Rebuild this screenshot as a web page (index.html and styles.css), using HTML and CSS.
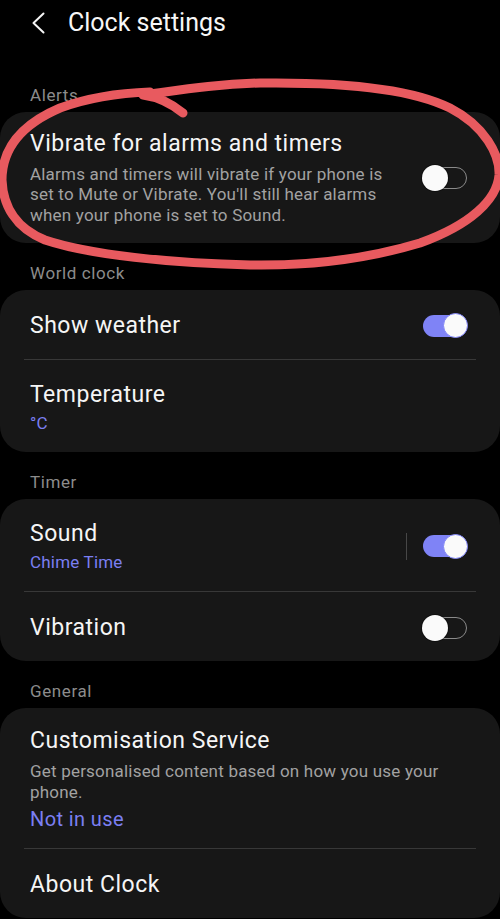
FILE: index.html
```html
<!DOCTYPE html>
<html lang="en">
<head>
<meta charset="utf-8">
<title>Clock settings</title>
<link rel="stylesheet" href="styles.css">
</head>
<body>
<div class="screen">
  <header class="topbar">
    <svg class="back" viewBox="0 0 13 22" width="13" height="22" aria-hidden="true">
      <path d="M11.5 1.5 L1.5 11 L11.5 20.5" fill="none" stroke="#f5f5f5" stroke-width="2" stroke-linecap="round" stroke-linejoin="round"/>
    </svg>
    <h1 class="title">Clock settings</h1>
  </header>

  <div class="section-label">Alerts</div>
  <section class="card">
    <div class="row row-alert">
      <div class="text">
        <div class="row-title">Vibrate for alarms and timers</div>
        <div class="row-desc">Alarms and timers will vibrate if your phone is<br>set to Mute or Vibrate. You'll still hear alarms<br>when your phone is set to Sound.</div>
      </div>
      <div class="toggle off"><span class="knob"></span></div>
    </div>
  </section>

  <div class="section-label">World clock</div>
  <section class="card">
    <div class="row row-1">
      <div class="text"><div class="row-title">Show weather</div></div>
      <div class="toggle on"><span class="knob"></span></div>
    </div>
    <div class="divider"></div>
    <div class="row row-2">
      <div class="text">
        <div class="row-title">Temperature</div>
        <div class="row-sub">°C</div>
      </div>
    </div>
  </section>

  <div class="section-label">Timer</div>
  <section class="card">
    <div class="row row-2">
      <div class="text">
        <div class="row-title">Sound</div>
        <div class="row-sub">Chime Time</div>
      </div>
      <span class="vdiv"></span>
      <div class="toggle on"><span class="knob"></span></div>
    </div>
    <div class="divider"></div>
    <div class="row row-1">
      <div class="text"><div class="row-title">Vibration</div></div>
      <div class="toggle off"><span class="knob"></span></div>
    </div>
  </section>

  <div class="section-label">General</div>
  <section class="card">
    <div class="row row-custom">
      <div class="text">
        <div class="row-title">Customisation Service</div>
        <div class="row-desc">Get personalised content based on how you use your<br>phone.</div>
        <div class="row-link">Not in use</div>
      </div>
    </div>
    <div class="divider"></div>
    <div class="row row-1">
      <div class="text"><div class="row-title">About Clock</div></div>
    </div>
  </section>

  <svg class="annotation" viewBox="0 0 500 919" width="500" height="919" aria-hidden="true">
    <path d="M183 113 C172 104 158 97 143 95 C180 90 215 84 260 83 C340 82 410 88 450 108 C485 126 500 155 499 175 C497 200 470 225 420 243 C370 258 310 266 250 265 C170 263 90 255 45 240 C15 228 3 205 2 180 C2 150 20 125 60 108 C90 97 120 93 150 92" fill="none" stroke="#e85a5f" stroke-width="9" stroke-linecap="round" stroke-linejoin="round"/>
  </svg>
</div>
</body>
</html>
```

FILE: styles.css
```css
html, body {
  margin: 0;
  padding: 0;
  background: #000;
}

body {
  font-family: Roboto, "Noto Sans", "Liberation Sans", sans-serif;
  color: #f5f5f5;
}

.screen {
  position: relative;
  width: 500px;
  height: 919px;
  overflow: hidden;
  background: #000;
}

.topbar {
  height: 65px;
  display: flex;
  align-items: flex-start;
  padding-left: 32px;
  box-sizing: border-box;
}

.back {
  margin-top: 12px;
  flex: none;
}

.title {
  margin: 8px 0 0 23px;
  font-size: 25px;
  line-height: 30px;
  font-weight: 400;
  color: #f7f7f7;
}

.section-label {
  margin: 19px 0 6px;
  padding: 0 30px;
  font-size: 17px;
  line-height: 22px;
  letter-spacing: 0.6px;
  color: #8c8c8c;
}

.card {
  background: #171717;
  border-radius: 26px;
}

.row {
  display: flex;
  align-items: center;
  padding: 0 33px 0 30px;
  box-sizing: border-box;
}

.row-alert { height: 131px; }
.row-1 { height: 69px; padding-top: 2px; }
.row-2 { height: 92px; padding-top: 2px; }
.row-custom { height: 140px; padding-top: 2px; }

.text {
  flex: 1;
  min-width: 0;
}

.row-title {
  font-size: 23px;
  line-height: 28px;
  letter-spacing: 0.5px;
  color: #f5f5f5;
}

.row-sub {
  margin-top: 3px;
  font-size: 17px;
  line-height: 22px;
  letter-spacing: 0.2px;
  color: #7b7ff2;
}

.row-desc {
  margin-top: 6px;
  font-size: 17px;
  line-height: 20.5px;
  letter-spacing: 0.2px;
  color: #a2a2a2;
  white-space: nowrap;
}

.row-link {
  margin-top: 5px;
  font-size: 20px;
  line-height: 24px;
  letter-spacing: 0.4px;
  color: #7b7ff2;
}

.divider {
  height: 1px;
  margin: 0 24px;
  background: #383838;
}

.vdiv {
  width: 1px;
  height: 27px;
  margin-right: 16px;
  background: #474747;
  flex: none;
}

.toggle {
  width: 44px;
  height: 22px;
  border-radius: 11px;
  display: flex;
  align-items: center;
  flex: none;
  box-sizing: border-box;
}

.toggle .knob {
  width: 26px;
  height: 26px;
  border-radius: 50%;
  background: #fafafa;
  flex: none;
  box-sizing: border-box;
}

.toggle.on {
  background: #7f83f6;
  justify-content: flex-end;
}

.toggle.on .knob {
  width: 25px;
  height: 25px;
  border: 1.5px solid #7f83f6;
  margin-right: -1px;
}

.toggle.off {
  border: 1.5px solid #8a8a8a;
  justify-content: flex-start;
}

.toggle.off .knob {
  margin-left: -2.5px;
  box-shadow: 0 0 0 1px rgba(0, 0, 0, 0.35);
}

.annotation {
  position: absolute;
  left: 0;
  top: 0;
  pointer-events: none;
}
```
